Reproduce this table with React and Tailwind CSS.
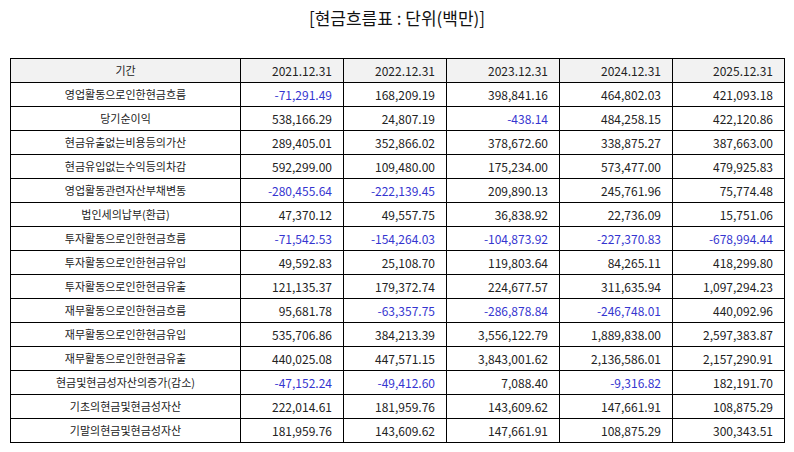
import React from 'react';

const years = ['2021.12.31', '2022.12.31', '2023.12.31', '2024.12.31', '2025.12.31'];

const rows = [
  ['영업활동으로인한현금흐름', '-71,291.49', '168,209.19', '398,841.16', '464,802.03', '421,093.18'],
  ['당기순이익', '538,166.29', '24,807.19', '-438.14', '484,258.15', '422,120.86'],
  ['현금유출없는비용등의가산', '289,405.01', '352,866.02', '378,672.60', '338,875.27', '387,663.00'],
  ['현금유입없는수익등의차감', '592,299.00', '109,480.00', '175,234.00', '573,477.00', '479,925.83'],
  ['영업활동관련자산부채변동', '-280,455.64', '-222,139.45', '209,890.13', '245,761.96', '75,774.48'],
  ['법인세의납부(환급)', '47,370.12', '49,557.75', '36,838.92', '22,736.09', '15,751.06'],
  ['투자활동으로인한현금흐름', '-71,542.53', '-154,264.03', '-104,873.92', '-227,370.83', '-678,994.44'],
  ['투자활동으로인한현금유입', '49,592.83', '25,108.70', '119,803.64', '84,265.11', '418,299.80'],
  ['투자활동으로인한현금유출', '121,135.37', '179,372.74', '224,677.57', '311,635.94', '1,097,294.23'],
  ['재무활동으로인한현금흐름', '95,681.78', '-63,357.75', '-286,878.84', '-246,748.01', '440,092.96'],
  ['재무활동으로인한현금유입', '535,706.86', '384,213.39', '3,556,122.79', '1,889,838.00', '2,597,383.87'],
  ['재무활동으로인한현금유출', '440,025.08', '447,571.15', '3,843,001.62', '2,136,586.01', '2,157,290.91'],
  ['현금및현금성자산의증가(감소)', '-47,152.24', '-49,412.60', '7,088.40', '-9,316.82', '182,191.70'],
  ['기초의현금및현금성자산', '222,014.61', '181,959.76', '143,609.62', '147,661.91', '108,875.29'],
  ['기말의현금및현금성자산', '181,959.76', '143,609.62', '147,661.91', '108,875.29', '300,343.51'],
];

const colWidths = ['w-[230px]', 'w-[103px]', 'w-[103px]', 'w-[113px]', 'w-[113px]', 'w-[112px]'];

export default function App() {
  return (
    <div
      className="w-[794px] h-[452px] bg-white px-[10px] text-[#222]"
      style={{ fontFamily: '"Noto Sans CJK KR", "Noto Sans", sans-serif' }}
    >
      {/* Title */}
      <div className="h-[36px] flex items-center justify-center text-[17px] text-[#111]">
        [현금흐름표 : 단위(백만)]
      </div>

      {/* Cash flow table */}
      <table className="mt-[22px] w-[775px] table-fixed border-collapse text-[11px]">
        <colgroup>
          {colWidths.map((w, i) => (
            <col key={i} className={w} />
          ))}
        </colgroup>
        <thead>
          <tr className="h-[24px] bg-[#f2f2f2]">
            <th className="border border-black font-normal text-center">기간</th>
            {years.map((y) => (
              <th key={y} className="border border-black font-normal text-right pr-[11px] text-[12px]">
                {y}
              </th>
            ))}
          </tr>
        </thead>
        <tbody>
          {rows.map(([label, ...vals]) => (
            <tr key={label} className="h-[24px]">
              <td className="border border-black text-center">{label}</td>
              {vals.map((v, i) => (
                <td
                  key={i}
                  className={
                    v.startsWith('-')
                      ? 'border border-black text-right pr-[11px] text-[12px] text-[#3535d0]'
                      : 'border border-black text-right pr-[11px] text-[12px]'
                  }
                >
                  {v}
                </td>
              ))}
            </tr>
          ))}
        </tbody>
      </table>
    </div>
  );
}
